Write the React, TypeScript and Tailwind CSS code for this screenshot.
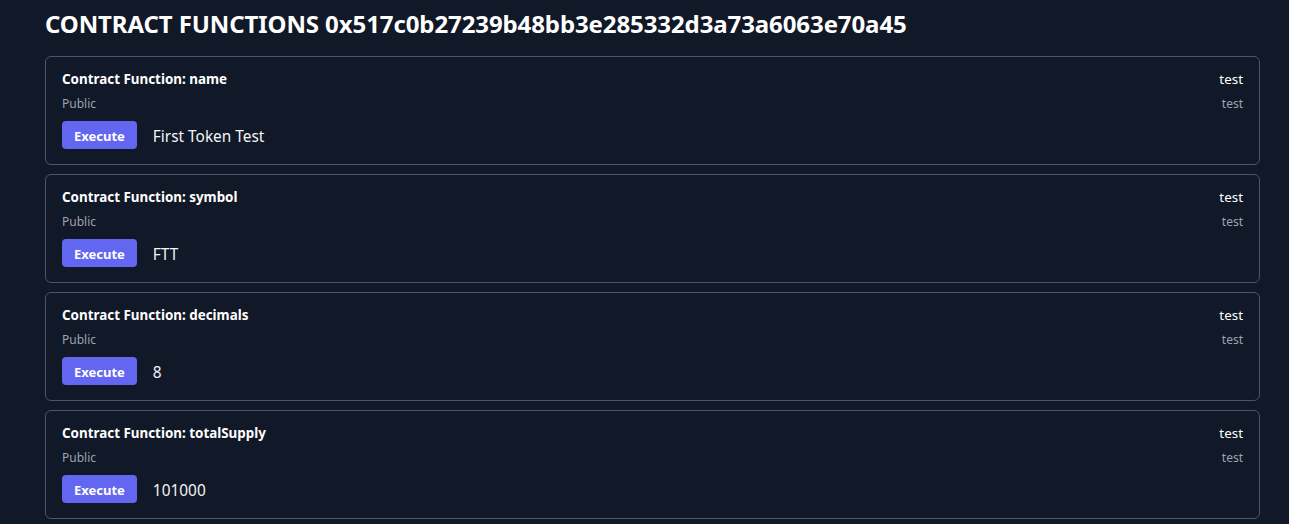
import React from 'react'

const functions = [
  { name: 'name', result: 'First Token Test' },
  { name: 'symbol', result: 'FTT' },
  { name: 'decimals', result: '8' },
  { name: 'totalSupply', result: '101000' }
]

const App: React.FC = () => {
  return (
    <div className="min-h-screen bg-[#111827] text-white font-['Noto_Sans',sans-serif] pl-[45px] pt-[8px]">
      <h1 className="text-2xl leading-8 font-bold tracking-[-0.1px] mb-[16px]">
        CONTRACT FUNCTIONS 0x517c0b27239b48bb3e285332d3a73a6063e70a45
      </h1>

      <div className="w-[1215px] flex flex-col gap-[9px]">
        {functions.map((fn) => (
          <div
            key={fn.name}
            className="border border-[#4b5563] rounded-md px-4 pt-[12px] pb-[15px]"
          >
            <div className="flex justify-between items-center h-5 text-[13.4px] font-bold">
              <span>Contract Function: {fn.name}</span>
              <span className="font-normal">test</span>
            </div>
            <div className="flex justify-between items-center h-4 mt-[7px] text-xs text-[#9ca3af]">
              <span>Public</span>
              <span>test</span>
            </div>
            <div className="flex items-center gap-4 mt-[9px]">
              <button className="h-7 px-3 pt-[3px] rounded bg-[#6366f1] text-[13px] font-bold text-white">
                Execute
              </button>
              <span className="text-[15.4px] pt-[3px] text-gray-100">{fn.result}</span>
            </div>
          </div>
        ))}
      </div>
    </div>
  )
}

export default App
